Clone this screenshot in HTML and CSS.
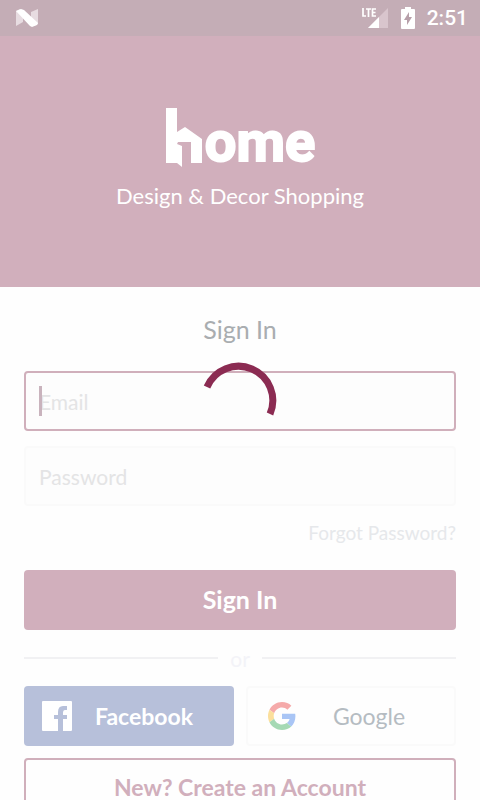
FILE: index.html
```html
<!DOCTYPE html>
<html lang="en">
<head>
<meta charset="utf-8">
<meta name="viewport" content="width=device-width, initial-scale=1">
<title>Sign In</title>
<link rel="stylesheet" href="styles.css">
</head>
<body>
<div class="status">
  <svg class="status-n" width="24" height="20" viewBox="0 0 24 20" aria-hidden="true">
    <path d="M1 3 5 1 8 4V14L1 18ZM16 4 23 1V16L19 18 16 15Z" fill="#e7dce1"/>
    <path d="M1 3 6 1 9 2 23 15 22 17 17 19 15 18Z" fill="#fff"/>
  </svg>
  <div class="status-right">
    <svg width="28" height="22" viewBox="0 0 28 22" aria-hidden="true">
      <path d="M27 1V21H7Z" fill="#d9c5cd"/>
      <path d="M18 10V21H7Z" fill="#fff"/>
      <path d="M2 1V9H5M5 2H10M7.500 2V10M15 2H11.500V9H15M11.500 5.500H14.500" fill="none" stroke="#fff" stroke-width="1.700"/>
    </svg>
    <svg width="14" height="22" viewBox="0 0 14 22" aria-hidden="true">
      <path d="M4 0H10V2H13Q14 2 14 3V21Q14 22 13 22H1Q0 22 0 21V3Q0 2 1 2H4Z" fill="#fff"/>
      <path d="M8 5 3 13H6V18L11 10H8Z" fill="#b79fa9"/>
    </svg>
    <span class="clock">2:51</span>
  </div>
</div>
<header class="hero">
  <h1 class="logo">
    <svg width="38" height="60" viewBox="0 0 38 60" role="img" aria-label="h">
      <path d="M1 0H12V24L20 19 37 31V55H26V34H13L12 36 17 38V59L12 55H1Z" fill="#fff"/>
    </svg>
    <span>ome</span>
  </h1>
  <p class="tagline">Design &amp; Decor Shopping</p>
</header>
<main class="content">
  <h2 class="title">Sign In</h2>
  <form class="form">
    <div class="field">
      <input class="input active" type="email" aria-label="Email" placeholder="Email">
      <span class="caret"></span>
    </div>
    <div class="field">
      <input class="input" type="password" aria-label="Password" placeholder="Password">
    </div>
    <a class="forgot" href="#">Forgot Password?</a>
    <button class="button primary" type="submit">Sign In</button>
    <div class="divider"><span>or</span></div>
    <div class="social">
      <button class="button facebook" type="button">
        <svg width="30" height="30" viewBox="0 0 30 30" aria-hidden="true">
          <path d="M1 0H29Q30 0 30 1V29Q30 30 29 30H21V18H25V14H21V12Q21 9 23 9H25V5H21Q16 5 16 11V14H12V18H16V30H1Q0 30 0 29V1Q0 0 1 0Z" fill="#fff"/>
        </svg>
        <span>Facebook</span>
      </button>
      <button class="button google" type="button">
        <svg width="28" height="28" viewBox="0 0 48 48" aria-hidden="true">
          <path fill="#f5aaaa" d="M24 9.500c3.540 0 6.710 1.220 9.210 3.600l6.850-6.850C35.900 2.380 30.470 0 24 0 14.620 0 6.510 5.380 2.560 13.220l7.980 6.190C12.430 13.720 17.740 9.500 24 9.500z"/>
          <path fill="#a9c5f5" d="M46.980 24.550c0-1.570-.15-3.090-.38-4.550H24v9.020h12.940c-.58 2.960-2.260 5.480-4.780 7.180l7.730 6c4.510-4.180 7.090-10.360 7.090-17.650z"/>
          <path fill="#fbdf9c" d="M10.530 28.590c-.48-1.450-.76-2.990-.76-4.590s.27-3.140.76-4.590l-7.980-6.190C.92 16.460 0 20.120 0 24s.92 7.540 2.560 10.780z"/>
          <path fill="#a5d9b4" d="M24 48c6.480 0 11.930-2.130 15.890-5.810l-7.730-6c-2.150 1.450-4.920 2.300-8.160 2.300-6.260 0-11.570-4.220-13.470-9.910l-7.980 6.190C6.510 42.620 14.620 48 24 48z"/>
        </svg>
        <span>Google</span>
      </button>
    </div>
    <button class="button create" type="button">New? Create an Account</button>
  </form>
</main>
<svg class="spinner" width="76" height="76" viewBox="0 0 76 76" role="status" aria-label="Loading">
  <path d="M5 25A34 34 0 0 1 68 52" fill="none" stroke="#8b2b52" stroke-width="7"/>
</svg>
</body>
</html>
```
FILE: styles.css
```css
* { box-sizing: border-box; }
html { scrollbar-width: none; }
body {
  margin: 0;
  background: #fefefe;
  font-family: Lato, "Open Sans", sans-serif;
  color: #a9adb0;
}
h1, h2, p { margin: 0; }

.status {
  display: flex;
  align-items: center;
  justify-content: space-between;
  height: 36px;
  padding: 0 12px 0 15px;
  background: #c4adb6;
}
.status-right { display: flex; align-items: center; gap: 12px; }
.clock {
  font: 500 21px/36px Roboto, sans-serif;
  color: #fff;
}

.hero {
  display: flex;
  flex-direction: column;
  align-items: center;
  padding: 72px 24px 76px;
  background: #d1afbc;
  color: #fff;
}
.logo {
  display: flex;
  align-items: flex-start;
  gap: 2px;
  height: 60px;
  font: bold 56px/68px Roboto, sans-serif;
  -webkit-text-stroke: 2px #fff;
}
.tagline {
  margin-top: 12px;
  font-size: 22px;
  line-height: 31px;
}

.content { padding: 24px; }
.title {
  font-size: 25px;
  font-weight: 400;
  line-height: 36px;
  text-align: center;
}
.form {
  display: flex;
  flex-direction: column;
  margin-top: 24px;
}
.field { position: relative; margin-bottom: 15px; }
.input {
  display: block;
  width: 100%;
  height: 60px;
  padding: 0 13px;
  border: 2px solid #fafafa;
  border-radius: 4px;
  outline: none;
  background: #fdfdfd;
  color: #a9adb0;
  font: inherit;
  font-size: 21px;
}
.input.active { border-color: #d0afbb; }
.input::placeholder { color: #e4e4e5; opacity: 1; }
.caret {
  position: absolute;
  top: 15px;
  left: 15px;
  width: 3px;
  height: 30px;
  background: #c9b3bd;
}
.forgot {
  align-self: flex-end;
  font-size: 19px;
  line-height: 24px;
  color: #e6e8eb;
  text-decoration: none;
}
.button {
  height: 60px;
  padding: 0 0 2px;
  border: 0;
  border-radius: 4px;
  font: inherit;
  font-size: 23px;
}
.primary {
  margin-top: 25px;
  background: #d1afbc;
  color: #fff;
  font-size: 25px;
  font-weight: 700;
}
.divider {
  display: flex;
  align-items: center;
  gap: 12px;
  height: 56px;
  font-size: 21px;
  color: #f3f3f8;
}
.divider::before, .divider::after {
  content: "";
  flex: 1;
  height: 2px;
  background: #f1f1f3;
}
.social {
  display: grid;
  grid-template-columns: 1fr 1fr;
  gap: 12px;
}
.social .button {
  display: flex;
  align-items: center;
  padding: 0 18px;
}
.social .button span { flex: 1; text-align: center; }
.facebook {
  background: #b7c0da;
  color: #fff;
  font-weight: 700;
}
.social .google {
  border: 2px solid #fafafa;
  padding: 0 12px 0 20px;
  background: #fefefe;
  color: #b5bcc2;
}
.create {
  margin-top: 12px;
  border: 2px solid #d0afbb;
  background: #fefefe;
  color: #d1afbc;
  font-weight: 700;
}
.spinner {
  position: fixed;
  top: 50%;
  left: 50%;
  margin: -38px 0 0 -38px;
}
```
